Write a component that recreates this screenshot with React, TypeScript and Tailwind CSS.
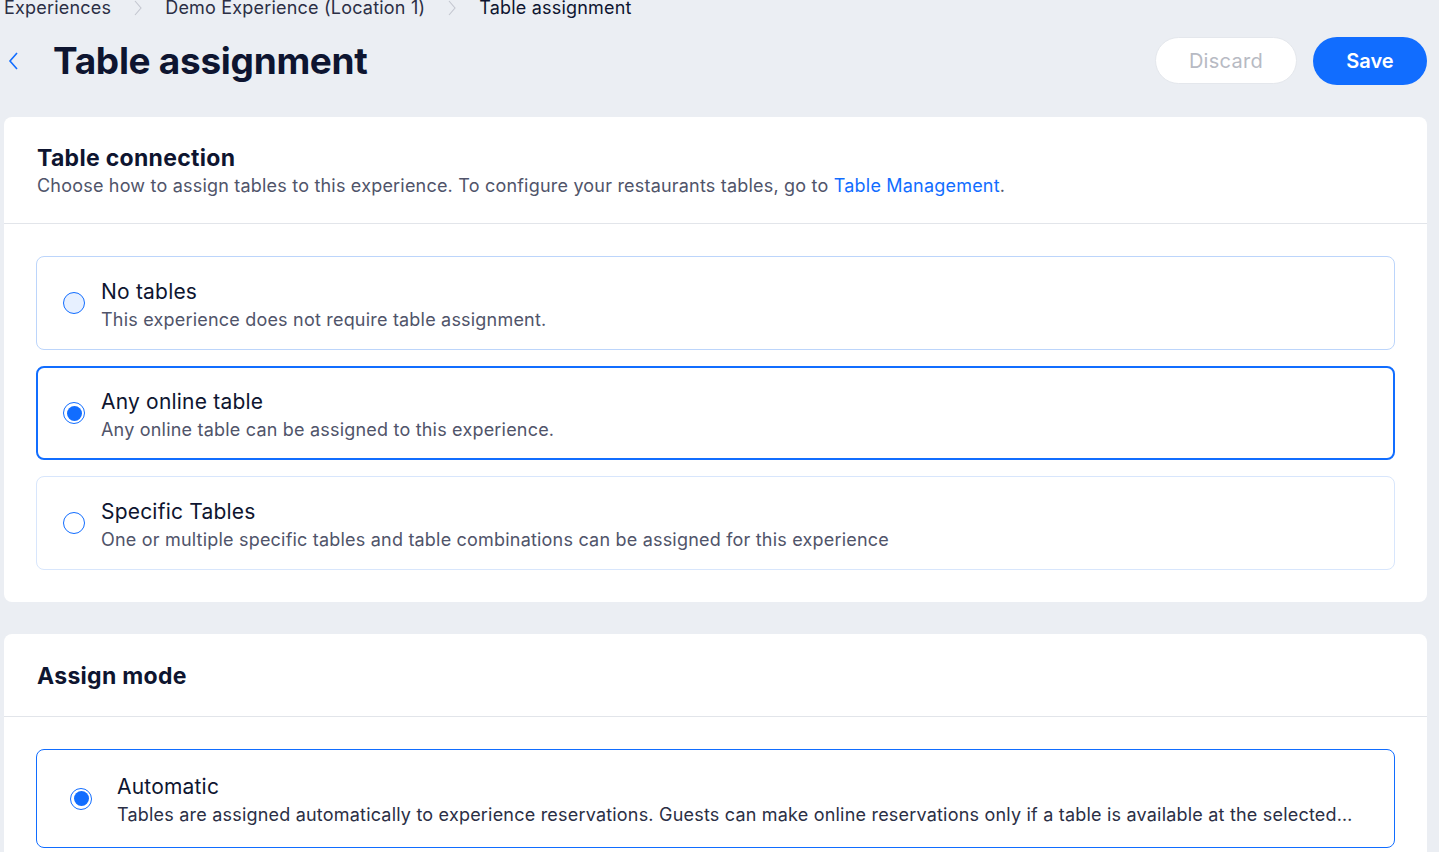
import React, { useState } from 'react';

type Option = {
  id: string;
  title: string;
  description: string;
};

const tableOptions: Option[] = [
  {
    id: 'none',
    title: 'No tables',
    description: 'This experience does not require table assignment.',
  },
  {
    id: 'any',
    title: 'Any online table',
    description: 'Any online table can be assigned to this experience.',
  },
  {
    id: 'specific',
    title: 'Specific Tables',
    description:
      'One or multiple specific tables and table combinations can be assigned for this experience',
  },
];

function Chevron() {
  return (
    <svg width="10" height="18" viewBox="0 0 10 18" fill="none" className="mx-[22px]">
      <path d="M2 2l6 7-6 7" stroke="#c3c6cf" strokeWidth="1.1" />
    </svg>
  );
}

function Radio({ checked, hover }: { checked: boolean; hover?: boolean }) {
  if (checked) {
    return (
      <span className="flex h-[22px] w-[22px] shrink-0 items-center justify-center rounded-full border border-[#116dff] bg-white">
        <span className="h-[15px] w-[15px] rounded-full bg-[#116dff]" />
      </span>
    );
  }
  return (
    <span
      className={`h-[22px] w-[22px] shrink-0 rounded-full border border-[#116dff] ${
        hover ? 'bg-[#e7f0ff]' : 'bg-white'
      }`}
    />
  );
}

function App() {
  const [selected, setSelected] = useState('any');

  return (
    <div
      className="min-h-screen overflow-hidden bg-[#ebeef3] pl-1 pr-3 text-[#0e1530]"
      style={{ fontFamily: 'Inter, "Noto Sans", sans-serif' }}
    >
      <div className="-mt-[4px] flex h-6 items-center text-[18px] leading-6 tracking-[0.2px] text-[#2b2f45]">
        <span>Experiences</span>
        <Chevron />
        <span>Demo Experience (Location 1)</span>
        <Chevron />
        <span className="text-[#0e1530]">Table assignment</span>
      </div>

      <div className="flex h-[81px] items-center">
        <button className="ml-[3px] flex h-8 w-8 items-center">
          <svg width="12" height="20" viewBox="0 0 12 20" fill="none">
            <path d="M10 2L3 10l7 8" stroke="#116dff" strokeWidth="1.6" />
          </svg>
        </button>
        <h1 className="ml-[14px] text-[37px] font-bold tracking-[-0.3px] text-[#0e1530]">
          Table assignment
        </h1>
        <div className="ml-auto flex items-center gap-4">
          <button className="h-[47px] w-[142px] rounded-full border border-[#e4e7ec] bg-white text-[20px] tracking-[0.3px] text-[#b7bac3]">
            Discard
          </button>
          <button className="h-[48px] w-[114px] rounded-full bg-[#116dff] text-[20px] font-semibold text-white">
            Save
          </button>
        </div>
      </div>

      <section className="mt-4 rounded-lg bg-white">
        <div className="border-b border-[#e2e5ea] px-[33px] pb-[25px] pt-[27px]">
          <h2 className="text-[23px] font-bold leading-7 tracking-[0.3px]">Table connection</h2>
          <p className="mt-[2px] text-[18px] leading-6 tracking-[0.2px] text-[#50546a]">
            Choose how to assign tables to this experience. To configure your restaurants tables, go to{' '}
            <a className="text-[#116dff]">Table Management</a>.
          </p>
        </div>
        <div className="flex flex-col gap-4 px-8 pb-8 pt-8">
          {tableOptions.map((option, index) => {
            const isSelected = selected === option.id;
            return (
              <div
                key={option.id}
                onClick={() => setSelected(option.id)}
                className={`flex h-[94px] cursor-pointer items-center gap-4 rounded-lg ${
                  isSelected
                    ? 'border-2 border-[#116dff] pl-[25px]'
                    : index === 0
                    ? 'border border-[#bcd5fb] pl-[26px]'
                    : 'border border-[#d8e6fc] pl-[26px]'
                }`}
              >
                <Radio checked={isSelected} hover={index === 0} />
                <div className="pt-[6px]">
                  <div className="text-[21px] leading-7 tracking-[0.2px] text-[#0e1530]">{option.title}</div>
                  <div className="text-[18px] leading-7 tracking-[0.2px] text-[#50546a]">
                    {option.description}
                  </div>
                </div>
              </div>
            );
          })}
        </div>
      </section>

      <section className="mt-8 rounded-lg bg-white">
        <div className="border-b border-[#e2e5ea] px-[33px] pb-[26px] pt-[28px]">
          <h2 className="text-[23px] font-bold leading-7 tracking-[0.3px]">Assign mode</h2>
        </div>
        <div className="px-8 pb-8 pt-8">
          <div className="flex h-[99px] items-center gap-[25px] rounded-lg border border-[#116dff] pl-[33px] pr-10">
            <Radio checked />
            <div className="min-w-0 flex-1 pt-1">
              <div className="text-[21px] leading-7 tracking-[0.2px] text-[#0e1530]">Automatic</div>
              <div className="truncate text-[18px] leading-7 tracking-[0.2px] text-[#2b2f45]">
                Tables are assigned automatically to experience reservations. Guests can make online reservations
                only if a table is available at the selected time. Tables can be reassigned manually.
              </div>
            </div>
          </div>
        </div>
      </section>
    </div>
  );
}

export default App;
